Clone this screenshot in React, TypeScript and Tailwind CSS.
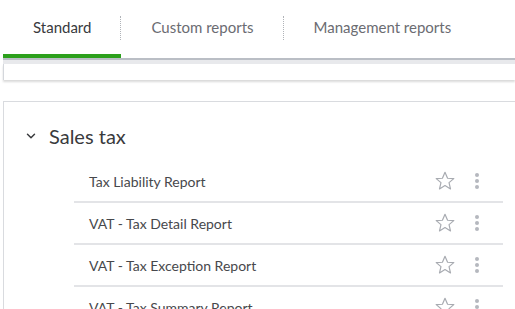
import { ChevronDown } from 'lucide-react';

const tabs = [
  { label: 'Standard', active: true },
  { label: 'Custom reports', active: false },
  { label: 'Management reports', active: false },
];

const reports = [
  'Tax Liability Report',
  'VAT - Tax Detail Report',
  'VAT - Tax Exception Report',
  'VAT - Tax Summary Report',
];

function StarOutline() {
  return (
    <svg width="22" height="22" viewBox="0 0 24 24" fill="none">
      <polygon
        points="12,2.5 14.8,9 21.6,9.4 16.4,13.8 18,20.6 12,16.9 6,20.6 7.6,13.8 2.4,9.4 9.2,9"
        stroke="#a8abb1"
        strokeWidth="1.3"
        strokeLinejoin="round"
      />
    </svg>
  );
}

function Dots() {
  return (
    <div className="flex flex-col gap-[2px]">
      <span className="block h-[4px] w-[4px] rounded-full bg-[#b5b8be]" />
      <span className="block h-[4px] w-[4px] rounded-full bg-[#b5b8be]" />
      <span className="block h-[4px] w-[4px] rounded-full bg-[#b5b8be]" />
    </div>
  );
}

export default function App() {
  return (
    <div className="h-[309px] w-[515px] overflow-hidden bg-white pl-[3px] font-[Lato]">
      {/* tabs */}
      <div className="flex">
        {tabs.map((t, i) => (
          <div
            key={t.label}
            className={`relative flex h-[58px] items-center px-[30px] border-b-4 text-[15px] ${
              t.active ? 'border-[#2ca01c] text-[#393a3d]' : 'border-transparent text-[#6b6c72]'
            }`}
          >
            {t.label}
            {i < tabs.length - 1 && (
              <span className="absolute right-0 top-[16px] h-[24px] border-r border-dotted border-[#b0b3b8]" />
            )}
          </div>
        ))}
      </div>
      <div className="h-[2px] bg-[#babec5]" />
      <div className="h-[4px] bg-[#e8e9ec]" />
      <div className="h-[16px] border-l border-[#d4d7dc] shadow-[0_2px_2px_rgba(0,0,0,0.15)]" />

      {/* sales tax panel */}
      <div className="mt-[21px] border-l border-t border-[#d9dbdf]">
        <div className="flex h-[59px] items-center gap-[11px] pl-[20px] pt-[8px]">
          <ChevronDown className="h-[14px] w-[14px] text-[#393a3d]" strokeWidth={2.5} />
          <span className="text-[20px] text-[#393a3d]">Sales tax</span>
        </div>
        <div className="ml-[70px] w-[429px]">
          {reports.map((r) => (
            <div
              key={r}
              className="flex h-[42px] items-center border-b-2 border-[#e3e4e7] pl-[15px] pr-[24px]"
            >
              <span className="flex-1 text-[14px] text-[#47484c]">{r}</span>
              <div className="flex items-center gap-[19px]">
                <StarOutline />
                <Dots />
              </div>
            </div>
          ))}
        </div>
      </div>
    </div>
  );
}
